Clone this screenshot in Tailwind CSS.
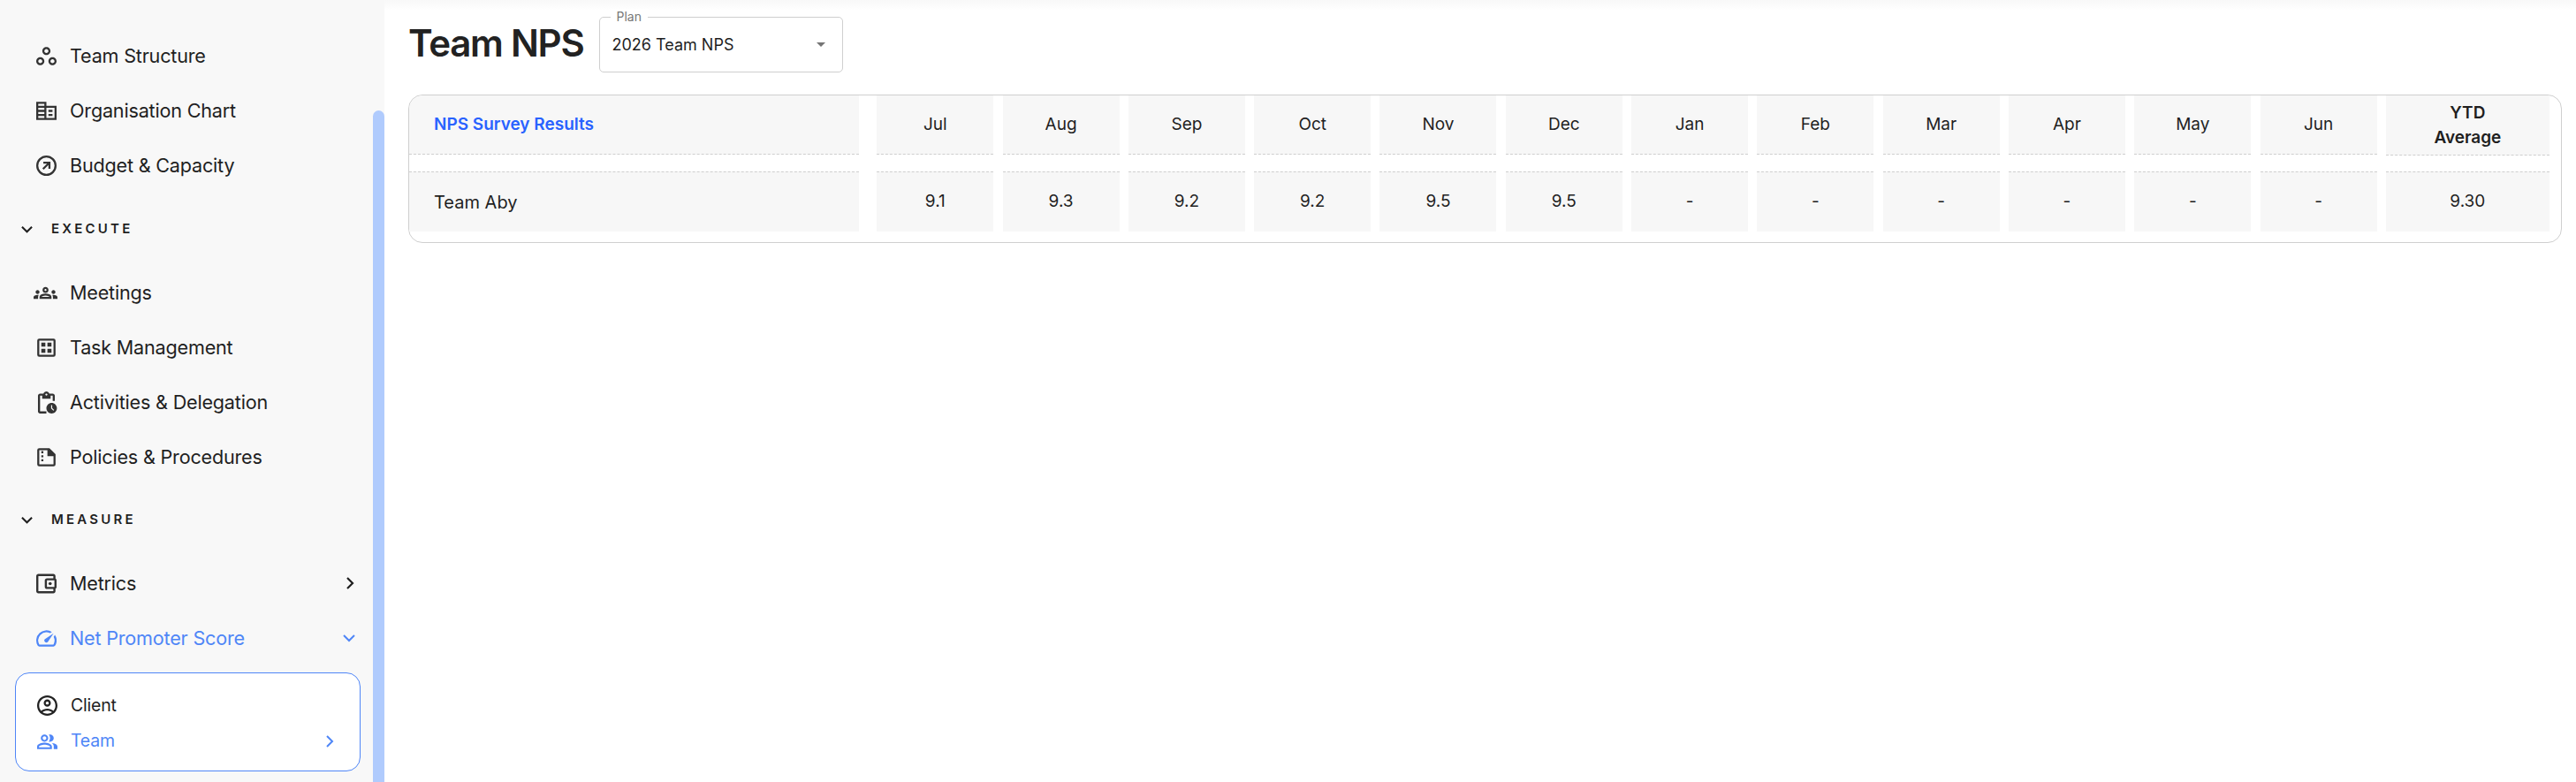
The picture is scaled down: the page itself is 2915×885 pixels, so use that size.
<!DOCTYPE html>
<html lang="en">
<head>
<meta charset="UTF-8">
<title>Team NPS</title>
<script src="https://cdn.jsdelivr.net/npm/@tailwindcss/browser@4"></script>
</head>
<body class="h-[885px] overflow-hidden bg-white font-['Inter',sans-serif] text-[#1f1f1f]">
<div class="flex h-[885px]">

  <!-- Sidebar -->
  <aside class="relative w-[435px] shrink-0 overflow-hidden bg-[#f8f8f8] pt-[32px] text-[21.6px] tracking-[-0.2px]">
    <div class="absolute right-0 top-[125px] bottom-0 w-[13px] rounded-t-full bg-[#b0cbfd]"></div>

    <a class="flex h-[62px] items-center gap-[15px] pl-[41px]">
      <svg class="h-[23px] w-[23px] text-[#333]" viewBox="2 2 20 20" fill="currentColor"><path d="M6 15c1.1 0 2 .9 2 2s-.9 2-2 2-2-.9-2-2 .9-2 2-2m0-2c-2.2 0-4 1.8-4 4s1.8 4 4 4 4-1.8 4-4-1.8-4-4-4zm6-8c1.1 0 2 .9 2 2s-.9 2-2 2-2-.9-2-2 .9-2 2-2m0-2C9.8 3 8 4.8 8 7s1.8 4 4 4 4-1.8 4-4-1.8-4-4-4zm6 12c1.1 0 2 .9 2 2s-.9 2-2 2-2-.9-2-2 .9-2 2-2m0-2c-2.2 0-4 1.8-4 4s1.8 4 4 4 4-1.8 4-4-1.8-4-4-4z"/></svg>
      <span>Team Structure</span>
    </a>
    <a class="flex h-[62px] items-center gap-[15px] pl-[41px]">
      <svg class="h-[23px] w-[23px] text-[#333]" viewBox="2 3 20 18" fill="currentColor"><path d="M2 3h10v4h10v14H2V3zm2 2v2h6V5H4zm0 4v2h6V9H4zm0 4v2h6v-2H4zm0 4v2h6v-2H4zm8-8v10h8V9h-8zm2 2h4v2h-4v-2zm0 4h4v2h-4v-2z"/></svg>
      <span>Organisation Chart</span>
    </a>
    <a class="flex h-[62px] items-center gap-[15px] pl-[41px]">
      <svg class="h-[23px] w-[23px] text-[#333]" viewBox="2 2 20 20" fill="currentColor"><path d="M12 2a10 10 0 1 0 0 20 10 10 0 0 0 0-20zm0 18a8 8 0 1 1 0-16 8 8 0 0 1 0 16zM9 8h7v7h-2v-3.6l-4.6 4.6L8 14.600l4.600-4.600H9V8z"/></svg>
      <span>Budget &amp; Capacity</span>
    </a>

    <div class="flex h-[82px] items-center gap-[21px] pl-[24px] text-[15px] font-semibold tracking-[3.2px]">
      <svg class="h-[13px] w-[13px]" viewBox="0 0 14 14" fill="none" stroke="currentColor" stroke-width="2.200"><path d="M1 4l6 6 6-6"/></svg>
      <span>EXECUTE</span>
    </div>

    <a class="flex h-[62px] items-center gap-[14px] pl-[38px]">
      <svg class="h-[27px] w-[27px] text-[#333]" viewBox="0 0 24 24" fill="currentColor"><path d="M4 13c1.1 0 2-.9 2-2s-.9-2-2-2-2 .9-2 2 .9 2 2 2zm1.130 1.100c-.37-.06-.74-.1-1.130-.1-.99 0-1.930.21-2.780.58C.48 14.900 0 15.620 0 16.430V18h4.500v-1.610c0-.83.23-1.610.63-2.290zM20 13c1.100 0 2-.9 2-2s-.9-2-2-2-2 .9-2 2 .9 2 2 2zm4 3.430c0-.81-.48-1.530-1.220-1.850-.85-.37-1.790-.58-2.780-.58-.39 0-.76.04-1.130.1.4.68.63 1.460.63 2.290V18H24v-1.570zm-7.760-2.780c-1.170-.52-2.610-.9-4.240-.9-1.630 0-3.070.39-4.240.9C6.680 14.130 6 15.210 6 16.390V18h12v-1.610c0-1.180-.68-2.260-1.760-2.740zM8.070 16c.09-.23.13-.39.91-.69.97-.38 1.990-.56 3.020-.56s2.050.18 3.020.56c.77.3.81.46.91.69H8.070zM12 8c.55 0 1 .45 1 1s-.45 1-1 1-1-.45-1-1 .45-1 1-1m0-2c-1.660 0-3 1.340-3 3s1.340 3 3 3 3-1.340 3-3-1.340-3-3-3z"/></svg>
      <span>Meetings</span>
    </a>
    <a class="flex h-[62px] items-center gap-[15px] pl-[41px]">
      <svg class="h-[23px] w-[23px] text-[#333]" viewBox="2 2 20 20" fill="currentColor"><path d="M5 3h14a2 2 0 0 1 2 2v14a2 2 0 0 1-2 2H5a2 2 0 0 1-2-2V5a2 2 0 0 1 2-2zm0 2v14h14V5H5zm2 2h4v4H7V7zm6 0h4v4h-4V7zm-6 6h4v4H7v-4zm6 0h4v4h-4v-4z"/></svg>
      <span>Task Management</span>
    </a>
    <a class="flex h-[62px] items-center gap-[15px] pl-[41px]">
      <svg class="h-[25px] w-[25px] -mx-[1px] text-[#333]" viewBox="2 1 20 21" fill="currentColor"><path d="M17 12c-2.760 0-5 2.240-5 5s2.240 5 5 5 5-2.240 5-5-2.240-5-5-5zm1.650 7.350L16.500 17.200V14h1v2.790l1.850 1.850-.7.710zM18 3h-3.180C14.400 1.840 13.300 1 12 1s-2.400.84-2.820 2H6c-1.100 0-2 .9-2 2v15c0 1.100.9 2 2 2h6v-2H6V5h2v3h8V5h2v5h2V5c0-1.100-.9-2-2-2zm-6 2c-.55 0-1-.45-1-1s.45-1 1-1 1 .45 1 1-.45 1-1 1z"/></svg>
      <span>Activities &amp; Delegation</span>
    </a>
    <a class="flex h-[62px] items-center gap-[15px] pl-[41px]">
      <svg class="h-[23px] w-[23px] text-[#333]" viewBox="2 2 20 20" fill="currentColor" fill-rule="evenodd"><path d="M5 3h10l6 6v10a2 2 0 0 1-2 2H5a2 2 0 0 1-2-2V5a2 2 0 0 1 2-2zm0 2v14h14v-8h-6V5H5zm2 1h2v2H7V6zm0 4h2v2H7v-2zm0 4h2v2H7v-2z"/></svg>
      <span>Policies &amp; Procedures</span>
    </a>

    <div class="flex h-[81px] items-center gap-[21px] pl-[24px] text-[15px] font-semibold tracking-[3.2px]">
      <svg class="h-[13px] w-[13px]" viewBox="0 0 14 14" fill="none" stroke="currentColor" stroke-width="2.200"><path d="M1 4l6 6 6-6"/></svg>
      <span>MEASURE</span>
    </div>

    <a class="flex h-[62px] items-center gap-[15px] pl-[41px] pr-[34px]">
      <svg class="h-[23px] w-[23px] text-[#333]" viewBox="3 3 19 18" fill="currentColor"><path d="M21 7.280V5c0-1.100-.9-2-2-2H5c-1.110 0-2 .9-2 2v14c0 1.100.89 2 2 2h14c1.100 0 2-.9 2-2v-2.280c.59-.35 1-.98 1-1.720V9c0-.74-.41-1.380-1-1.720zM20 9v6h-7V9h7zM5 19V5h14v2h-6c-1.100 0-2 .9-2 2v6c0 1.100.9 2 2 2h6v2H5z"/><circle cx="16" cy="12" r="1.500"/></svg>
      <span class="flex-1">Metrics</span>
      <svg class="h-[14px] w-[10px]" viewBox="0 0 10 14" fill="none" stroke="currentColor" stroke-width="2.200"><path d="M2 1l6 6-6 6"/></svg>
    </a>
    <a class="flex h-[62px] items-center gap-[15px] pl-[41px] pr-[33px] text-[#4f86f7]">
      <svg class="h-[23px] w-[23px]" viewBox="2 3 20 18" fill="currentColor"><path d="m20.380 8.570-1.230 1.850a8 8 0 0 1-.22 7.580H5.070A8 8 0 0 1 15.580 6.850l1.850-1.230A10 10 0 0 0 3.350 19a2 2 0 0 0 1.720 1h13.850a2 2 0 0 0 1.740-1 10 10 0 0 0-.27-10.440zm-9.790 6.840a2 2 0 0 0 2.830 0l5.660-8.490-8.490 5.660a2 2 0 0 0 0 2.830z"/></svg>
      <span class="flex-1">Net Promoter Score</span>
      <svg class="h-[10px] w-[14px]" viewBox="0 0 14 10" fill="none" stroke="currentColor" stroke-width="2"><path d="M1 2l6 6 6-6"/></svg>
    </a>

    <div class="ml-[17px] mt-[8px] h-[112px] w-[391px] rounded-[16px] border border-[#4f86f7] bg-white pl-[24px] pr-[29px] pt-[16px] text-[19.500px]">
      <a class="flex h-[41px] items-center gap-[15px]">
        <svg class="h-[23px] w-[23px] text-[#222]" viewBox="2 2 20 20" fill="currentColor"><path d="M12 2C6.480 2 2 6.480 2 12s4.480 10 10 10 10-4.480 10-10S17.520 2 12 2zM7.350 18.500C8.660 17.560 10.260 17 12 17s3.340.56 4.650 1.500c-1.310.94-2.910 1.500-4.650 1.500s-3.340-.56-4.650-1.500zm10.790-1.380C16.450 15.800 14.320 15 12 15s-4.450.8-6.140 2.120C4.700 15.730 4 13.950 4 12c0-4.420 3.580-8 8-8s8 3.580 8 8c0 1.950-.7 3.730-1.860 5.120z"/><path d="M12 6c-1.930 0-3.500 1.570-3.500 3.500S10.070 13 12 13s3.500-1.570 3.500-3.500S13.930 6 12 6zm0 5c-.83 0-1.500-.67-1.500-1.500S11.170 8 12 8s1.500.67 1.500 1.500S12.830 11 12 11z"/></svg>
        <span>Client</span>
      </a>
      <a class="flex h-[40px] items-center gap-[15px] text-[#4f86f7]">
        <svg class="h-[23px] w-[23px]" viewBox="1 4 22 16" fill="currentColor"><path d="M16.670 13.130C18.040 14.060 19 15.320 19 17v3h4v-3c0-2.180-3.570-3.470-6.330-3.870z"/><path d="M15 12c2.210 0 4-1.790 4-4s-1.790-4-4-4c-.47 0-.91.1-1.330.24C14.500 5.270 15 6.580 15 8s-.5 2.730-1.330 3.760c.42.14.86.24 1.330.24z"/><path d="M9 12c2.210 0 4-1.790 4-4s-1.790-4-4-4-4 1.790-4 4 1.790 4 4 4zm0-6c1.100 0 2 .9 2 2s-.9 2-2 2-2-.9-2-2 .9-2 2-2z"/><path d="M9 13c-2.670 0-8 1.340-8 4v3h16v-3c0-2.660-5.330-4-8-4zm6 5H3v-.99C3.200 16.290 6.300 15 9 15s5.800 1.290 6 2z"/></svg>
        <span class="flex-1">Team</span>
        <svg class="h-[14px] w-[10px]" viewBox="0 0 10 14" fill="none" stroke="currentColor" stroke-width="2"><path d="M2 1l6 6-6 6"/></svg>
      </a>
    </div>
  </aside>

  <!-- Main -->
  <main class="relative flex-1 pl-[27px] pr-[16px]">
    <div class="absolute inset-x-0 top-0 h-[12px] bg-gradient-to-b from-[#f8f8f8] to-white"></div>

    <div class="relative flex h-[107px] items-start gap-[17px] pt-[19px]">
      <h1 class="mt-[6px] text-[42px] font-semibold leading-[48px] tracking-[-1.250px] text-[#222]">Team NPS</h1>
      <div class="relative flex h-[63px] w-[276px] items-center justify-between rounded-[5px] border border-[#cfcfcf] pl-[14px] pr-[19px] text-[18px]">
        <span class="absolute -top-[10px] left-[12px] bg-white px-[7px] text-[14px] leading-[18px] text-[#777]">Plan</span>
        <span>2026 Team NPS</span>
        <span class="h-0 w-0 border-x-[5px] border-t-[5px] border-x-transparent border-t-[#757575]"></span>
      </div>
    </div>

    <div class="h-[168px] w-[2437px] rounded-[16px] border border-[#cfcfcf] pr-[13px] text-[19px]">
      <div class="grid grid-cols-[519px_repeat(12,132px)_185px] gap-x-[10.3px] text-center">
        <!-- header row -->
        <div class="mr-[10px] flex h-[67px] items-center rounded-tl-[16px] border-b border-dashed border-[#cfcfcf] bg-[#f7f7f7] pl-[28px] font-semibold text-[#2962ff]">NPS Survey Results</div>
        <div class="flex h-[67px] items-center justify-center border-b border-dashed border-[#cfcfcf] bg-[#f7f7f7]">Jul</div>
        <div class="flex h-[67px] items-center justify-center border-b border-dashed border-[#cfcfcf] bg-[#f7f7f7]">Aug</div>
        <div class="flex h-[67px] items-center justify-center border-b border-dashed border-[#cfcfcf] bg-[#f7f7f7]">Sep</div>
        <div class="flex h-[67px] items-center justify-center border-b border-dashed border-[#cfcfcf] bg-[#f7f7f7]">Oct</div>
        <div class="flex h-[67px] items-center justify-center border-b border-dashed border-[#cfcfcf] bg-[#f7f7f7]">Nov</div>
        <div class="flex h-[67px] items-center justify-center border-b border-dashed border-[#cfcfcf] bg-[#f7f7f7]">Dec</div>
        <div class="flex h-[67px] items-center justify-center border-b border-dashed border-[#cfcfcf] bg-[#f7f7f7]">Jan</div>
        <div class="flex h-[67px] items-center justify-center border-b border-dashed border-[#cfcfcf] bg-[#f7f7f7]">Feb</div>
        <div class="flex h-[67px] items-center justify-center border-b border-dashed border-[#cfcfcf] bg-[#f7f7f7]">Mar</div>
        <div class="flex h-[67px] items-center justify-center border-b border-dashed border-[#cfcfcf] bg-[#f7f7f7]">Apr</div>
        <div class="flex h-[67px] items-center justify-center border-b border-dashed border-[#cfcfcf] bg-[#f7f7f7]">May</div>
        <div class="flex h-[67px] items-center justify-center border-b border-dashed border-[#cfcfcf] bg-[#f7f7f7]">Jun</div>
        <div class="flex h-[68px] items-center justify-center border-b border-dashed border-[#cfcfcf] bg-[#f7f7f7] font-semibold leading-[28px]">YTD<br>Average</div>
        <!-- data row -->
        <div class="mr-[10px] mt-[18px] flex h-[68px] items-center border-t border-dashed border-[#cfcfcf] bg-[#f7f7f7] pl-[28px] text-[20px]">Team Aby</div>
        <div class="mt-[18px] flex h-[68px] items-center justify-center border-t border-dashed border-[#cfcfcf] bg-[#f7f7f7]">9.1</div>
        <div class="mt-[18px] flex h-[68px] items-center justify-center border-t border-dashed border-[#cfcfcf] bg-[#f7f7f7]">9.3</div>
        <div class="mt-[18px] flex h-[68px] items-center justify-center border-t border-dashed border-[#cfcfcf] bg-[#f7f7f7]">9.2</div>
        <div class="mt-[18px] flex h-[68px] items-center justify-center border-t border-dashed border-[#cfcfcf] bg-[#f7f7f7]">9.2</div>
        <div class="mt-[18px] flex h-[68px] items-center justify-center border-t border-dashed border-[#cfcfcf] bg-[#f7f7f7]">9.5</div>
        <div class="mt-[18px] flex h-[68px] items-center justify-center border-t border-dashed border-[#cfcfcf] bg-[#f7f7f7]">9.5</div>
        <div class="mt-[18px] flex h-[68px] items-center justify-center border-t border-dashed border-[#cfcfcf] bg-[#f7f7f7]">-</div>
        <div class="mt-[18px] flex h-[68px] items-center justify-center border-t border-dashed border-[#cfcfcf] bg-[#f7f7f7]">-</div>
        <div class="mt-[18px] flex h-[68px] items-center justify-center border-t border-dashed border-[#cfcfcf] bg-[#f7f7f7]">-</div>
        <div class="mt-[18px] flex h-[68px] items-center justify-center border-t border-dashed border-[#cfcfcf] bg-[#f7f7f7]">-</div>
        <div class="mt-[18px] flex h-[68px] items-center justify-center border-t border-dashed border-[#cfcfcf] bg-[#f7f7f7]">-</div>
        <div class="mt-[18px] flex h-[68px] items-center justify-center border-t border-dashed border-[#cfcfcf] bg-[#f7f7f7]">-</div>
        <div class="mt-[18px] flex h-[68px] items-center justify-center border-t border-dashed border-[#cfcfcf] bg-[#f7f7f7]">9.30</div>
      </div>
    </div>
  </main>
</div>
</body>
</html>
